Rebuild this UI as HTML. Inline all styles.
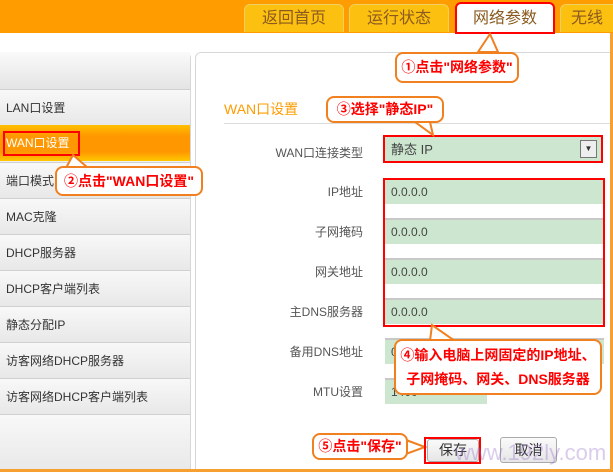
<!DOCTYPE html>
<html><head><meta charset="utf-8"><style>
*{margin:0;padding:0;box-sizing:border-box}
body{width:613px;height:472px;position:relative;overflow:hidden;background:#fff;font-family:"Liberation Sans","Noto Sans CJK SC",sans-serif;font-size:12px;color:#333}
.a{position:absolute}
.tab{position:absolute;top:4px;height:28px;width:100px;background:#fcc010;border-radius:6px 6px 0 0;border:1px solid #f0d060;border-bottom:none;font-size:16px;color:#8a5a20;text-align:center;line-height:28px}
.item{position:absolute;left:0;width:190px;height:36px;border-top:1px solid #d0d0d0;background:linear-gradient(#f8f8f8,#e8e8e8);padding-left:6px;line-height:36px;font-size:12px;color:#333}
.lbl{position:absolute;width:160px;left:203px;text-align:right;font-size:12px;color:#555}
.inp{position:absolute;left:385px;height:26px;background:#cde6cf;border-top:2px solid #c8c8c8;padding-left:6px;line-height:24px;font-size:12px;color:#444;width:219px}
.co{position:absolute;background:#fff;border:2px solid #f08020;border-radius:8px;color:#f00;font-weight:bold;font-size:14px;text-align:center;white-space:nowrap}
.red{position:absolute;border:2px solid #f00}
</style></head><body>
<div class="a" style="left:0;top:0;width:613px;height:33px;background:#ff9c00"></div>
<div class="tab" style="left:244px">返回首页</div>
<div class="tab" style="left:349px">运行状态</div>
<div class="tab" style="left:455px;background:#fff;border:2px solid #f00;top:2px;height:32px;line-height:30px">网络参数</div>
<div class="tab" style="left:560px;width:60px;text-align:left;padding-left:10px">无线</div>

<div class="a" style="left:0;top:52px;width:191px;height:420px;background:#efefef;border:1px solid #d8d8d8;border-left:none;border-radius:0 6px 0 0"></div>
<div class="item" style="top:52px;height:37px;border:none;background:linear-gradient(#fafafa,#e4e4e4)"></div>
<div class="item" style="top:89px">LAN口设置</div>
<div class="item" style="top:125px;background:linear-gradient(#ffc000,#ff9800 30%,#ff9800 75%,#ffc800);color:#fff;border-top:none">WAN口设置</div>
<div class="item" style="top:162px">端口模式</div>
<div class="item" style="top:198px">MAC克隆</div>
<div class="item" style="top:234px">DHCP服务器</div>
<div class="item" style="top:270px">DHCP客户端列表</div>
<div class="item" style="top:306px">静态分配IP</div>
<div class="item" style="top:342px">访客网络DHCP服务器</div>
<div class="item" style="top:378px">访客网络DHCP客户端列表</div>
<div class="item" style="top:414px;height:58px"></div>
<div class="red" style="left:3px;top:131px;width:77px;height:25px"></div>

<div class="a" style="left:195px;top:52px;width:418px;height:420px;border:1px solid #d8d8d8;border-radius:6px 0 0 0"></div>
<div class="a" style="left:224px;top:99px;font-size:14px;color:#ff9c00">WAN口设置</div>
<div class="a" style="left:224px;top:123px;width:389px;height:1px;background:#ddd"></div>

<div class="lbl" style="top:144px">WAN口连接类型</div>
<div class="inp" style="top:137px;height:25px;width:216px;border:none;line-height:25px;font-size:13px">静态 IP</div>
<div class="a" style="left:580px;top:140px;width:17px;height:18px;background:#eee;border:1px solid #777;font-size:8px;text-align:center;line-height:16px">▼</div>
<div class="red" style="left:383px;top:135px;width:220px;height:28px"></div>

<div class="lbl" style="top:183px">IP地址</div><div class="inp" style="top:178px">0.0.0.0</div>
<div class="lbl" style="top:223px">子网掩码</div><div class="inp" style="top:218px">0.0.0.0</div>
<div class="lbl" style="top:263px">网关地址</div><div class="inp" style="top:258px">0.0.0.0</div>
<div class="lbl" style="top:303px">主DNS服务器</div><div class="inp" style="top:298px">0.0.0.0</div>
<div class="red" style="left:383px;top:178px;width:222px;height:149px"></div>
<div class="lbl" style="top:343px">备用DNS地址</div><div class="inp" style="top:338px">0</div>
<div class="lbl" style="top:383px">MTU设置</div><div class="inp" style="top:378px;width:102px">1400</div>

<svg class="a" style="left:0;top:0" width="613" height="472">
<path d="M478 52 L490 34 L498 52Z" fill="#fff" stroke="#f08020" stroke-width="2"/>
<path d="M415 122 L433 135 L430 122Z" fill="#fff" stroke="#f08020" stroke-width="2"/>
<path d="M66 168 L73 155 L88 168Z" fill="#fff" stroke="#f08020" stroke-width="2"/>
<path d="M430 341 L432 325 L455 341Z" fill="#fff" stroke="#f08020" stroke-width="2"/>
<path d="M406 440 L425 447 L406 454Z" fill="#fff" stroke="#f08020" stroke-width="2"/>
</svg>
<div class="co" style="left:395px;top:52px;width:124px;height:31px;line-height:27px">①点击"网络参数"</div>
<div class="co" style="left:326px;top:96px;width:118px;height:27px;line-height:23px">③选择"静态IP"</div>
<div class="co" style="left:55px;top:166px;width:148px;height:30px;line-height:26px">②点击"WAN口设置"</div>
<div class="co" style="left:394px;top:339px;width:208px;height:56px;line-height:24px;padding-top:2px">④输入电脑上网固定的IP地址、<br>子网掩码、网关、DNS服务器</div>
<div class="co" style="left:312px;top:433px;width:96px;height:27px;line-height:23px">⑤点击"保存"</div>

<div class="a" style="left:427px;top:439px;width:52px;height:23px;background:linear-gradient(#fafafa,#e6e6e6);border:1px solid #aaa;border-radius:3px;text-align:center;line-height:21px;font-size:14px">保存</div>
<div class="red" style="left:424px;top:437px;width:57px;height:27px"></div>
<div class="a" style="left:500px;top:437px;width:57px;height:26px;background:linear-gradient(#fafafa,#e6e6e6);border:1px solid #aaa;border-radius:3px;text-align:center;line-height:24px;font-size:14px">取消</div>
<div class="a" style="left:455px;top:440px;font-size:22px;color:rgba(150,110,200,0.35)">www.192ly.com</div>
<div class="a" style="left:0;top:469px;width:613px;height:3px;background:#f5a030"></div>
<div class="a" style="left:610px;top:33px;width:3px;height:439px;background:#f5a030"></div>
</body></html>
